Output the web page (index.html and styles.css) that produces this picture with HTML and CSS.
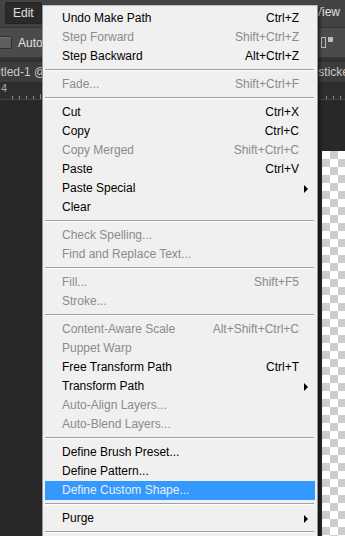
FILE: index.html
```html
<!DOCTYPE html>
<html>
<head>
<meta charset="utf-8">
<link rel="stylesheet" href="styles.css">
</head>
<body>
<div class="app">
  <div class="menubar">
    <span class="mb-item mb-active">Edit</span>
    <span class="mb-spacer"></span>
    <span class="mb-item mb-view">View</span>
  </div>
  <div class="options">
    <span class="checkbox"></span>
    <span class="opt-label">Auto-</span>
    <span class="opt-spacer"></span>
    <span class="opt-icon"><span class="oi-rect"></span><span class="oi-fill"></span></span>
  </div>
  <div class="gap"></div>
  <div class="tabs">
    <span class="tab-text">itled-1 @</span>
    <span class="opt-spacer"></span>
    <span class="tab-text tab-right">sticke</span>
  </div>
  <div class="ruler">
    <span class="ruler-num">4</span>
    <div class="ticks">
      <span class="tick"></span><span class="tick"></span><span class="tick"></span><span class="tick"></span><span class="tick tall"></span>
    </div>
    <span class="opt-spacer"></span>
    <div class="ticks ticks-right">
      <span class="tick"></span><span class="tick"></span><span class="tick"></span>
    </div>
  </div>
  <div class="workspace">
    <div class="ws-left"></div>
    <div class="canvas-col">
      <div class="canvas-top"></div>
      <div class="canvas"></div>
    </div>
  </div>
</div>

<div class="menu">
  <div class="mi"><span class="lbl">Undo Make Path</span><span class="sc">Ctrl+Z</span></div>
  <div class="mi dis"><span class="lbl">Step Forward</span><span class="sc">Shift+Ctrl+Z</span></div>
  <div class="mi"><span class="lbl">Step Backward</span><span class="sc">Alt+Ctrl+Z</span></div>
  <div class="sep"></div>
  <div class="mi dis"><span class="lbl">Fade...</span><span class="sc">Shift+Ctrl+F</span></div>
  <div class="sep"></div>
  <div class="mi"><span class="lbl">Cut</span><span class="sc">Ctrl+X</span></div>
  <div class="mi"><span class="lbl">Copy</span><span class="sc">Ctrl+C</span></div>
  <div class="mi dis"><span class="lbl">Copy Merged</span><span class="sc">Shift+Ctrl+C</span></div>
  <div class="mi"><span class="lbl">Paste</span><span class="sc">Ctrl+V</span></div>
  <div class="mi sub"><span class="lbl">Paste Special</span></div>
  <div class="mi"><span class="lbl">Clear</span></div>
  <div class="sep"></div>
  <div class="mi dis"><span class="lbl">Check Spelling...</span></div>
  <div class="mi dis"><span class="lbl">Find and Replace Text...</span></div>
  <div class="sep"></div>
  <div class="mi dis"><span class="lbl">Fill...</span><span class="sc">Shift+F5</span></div>
  <div class="mi dis"><span class="lbl">Stroke...</span></div>
  <div class="sep"></div>
  <div class="mi dis"><span class="lbl">Content-Aware Scale</span><span class="sc">Alt+Shift+Ctrl+C</span></div>
  <div class="mi dis"><span class="lbl">Puppet Warp</span></div>
  <div class="mi"><span class="lbl">Free Transform Path</span><span class="sc">Ctrl+T</span></div>
  <div class="mi sub"><span class="lbl">Transform Path</span></div>
  <div class="mi dis"><span class="lbl">Auto-Align Layers...</span></div>
  <div class="mi dis"><span class="lbl">Auto-Blend Layers...</span></div>
  <div class="sep"></div>
  <div class="mi"><span class="lbl">Define Brush Preset...</span></div>
  <div class="mi"><span class="lbl">Define Pattern...</span></div>
  <div class="mi hi"><span class="lbl">Define Custom Shape...</span></div>
  <div class="sep"></div>
  <div class="mi sub"><span class="lbl">Purge</span></div>
  <div class="sep"></div>
</div>
</body>
</html>
```
FILE: styles.css
```css
* { box-sizing: border-box; }
html, body {
  margin: 0;
  padding: 0;
  width: 345px;
  height: 536px;
  overflow: hidden;
  background: #282828;
  font-family: "Liberation Sans", Arial, sans-serif;
  font-size: 12px;
}
.app {
  display: flex;
  flex-direction: column;
  height: 536px;
}
.menubar {
  height: 28px;
  background: #434343;
  border-bottom: 1px solid #333;
  display: flex;
  align-items: flex-start;
  padding-top: 2px;
}
.mb-item {
  color: #e0e0e0;
  font-size: 12px;
  line-height: 21px;
  height: 22px;
  padding: 0 7px;
}
.mb-active {
  margin-left: 5px;
  background: #2a2a2a;
  border: 1px solid #232323;
  border-radius: 2px;
  width: 37px;
  padding: 0 0 0 7px;
}
.mb-spacer, .opt-spacer { flex: 1; }
.mb-view { padding: 0 5px 0 0; }
.options {
  height: 30px;
  background: #4b4b4b;
  display: flex;
  align-items: center;
  border-bottom: 1px solid #3a3a3a;
}
.checkbox {
  width: 13px;
  height: 13px;
  margin-left: -1px;
  background: #5f5f5f;
  border: 1px solid #2f2f2f;
  border-radius: 2px;
  box-shadow: inset 0 1px 0 #777;
}
.opt-label {
  color: #e4e4e4;
  margin-left: 6px;
  font-size: 12px;
}
.opt-icon {
  display: flex;
  gap: 2px;
  margin-right: 12px;
  align-items: flex-start;
}
.oi-rect {
  width: 5px;
  height: 11px;
  border: 1px solid #bdbdbd;
}
.oi-fill {
  width: 5px;
  height: 5px;
  background: #bdbdbd;
}
.gap {
  height: 4px;
  background: #303030;
}
.tabs {
  height: 21px;
  background: #3c3c3c;
  display: flex;
  align-items: center;
  border-bottom: 1px solid #2a2a2a;
}
.tab-text {
  color: #c8c8c8;
  font-size: 12px;
  margin-left: -2px;
}
.tab-right { margin-left: 0; margin-right: -4px; }
.ruler {
  height: 17px;
  background: #2e2e2e;
  display: flex;
  align-items: flex-end;
  position: relative;
  border-bottom: 1px solid #444;
}
.ruler-num {
  color: #aaa;
  font-size: 11px;
  position: absolute;
  left: 1px;
  top: -1px;
}
.ticks {
  display: flex;
  gap: 6px;
  align-items: flex-end;
  margin-left: 12px;
}
.tick {
  width: 1px;
  height: 3px;
  background: #8a8a8a;
}
.tick.tall { height: 5px; }
.ticks-right { margin-left: 0; margin-right: 4px; gap: 6px; }
.workspace {
  flex: 1;
  display: flex;
  background: #282828;
}
.ws-left { width: 322px; }
.canvas-col {
  flex: 1;
  display: flex;
  flex-direction: column;
}
.canvas-top { height: 51px; }
.canvas {
  flex: 1;
  background-color: #fff;
  background-image:
    linear-gradient(45deg, #cccccc 25%, transparent 25%, transparent 75%, #cccccc 75%),
    linear-gradient(45deg, #cccccc 25%, transparent 25%, transparent 75%, #cccccc 75%);
  background-size: 16px 16px;
  background-position: 0 0, 8px 8px;
}

/* dropdown menu overlay */
.menu {
  position: absolute;
  left: 42px;
  top: 5px;
  width: 276px;
  background: #f0f0f0;
  border: 1px solid #979797;
  border-top-color: #bdbdbd;
  padding: 3px 0 0 0;
  box-shadow: 2px 2px 3px rgba(0,0,0,0.55);
  height: 540px;
}
.mi {
  position: relative;
  display: flex;
  height: 19px;
  line-height: 19px;
  margin: 0 2px;
  padding: 0 16px 0 17px;
  color: #000;
  white-space: nowrap;
}
.mi .lbl { flex: 1; }
.mi .sc { text-align: right; }
.mi.dis { color: #8b8b8b; }
.mi.hi {
  background: #3399ff;
  color: #e8eef5;
}
.mi.sub::after {
  content: "";
  position: absolute;
  right: 7px;
  top: 6px;
  border-left: 4px solid #000;
  border-top: 4px solid transparent;
  border-bottom: 4px solid transparent;
}
.sep {
  height: 9px;
  margin: 0 3px 0 2px;
  padding-top: 3px;
}
.sep::before {
  content: "";
  display: block;
  height: 1px;
  background: #a0a0a0;
}
.sep::after {
  content: "";
  display: block;
  height: 1px;
  background: #ffffff;
}
```
